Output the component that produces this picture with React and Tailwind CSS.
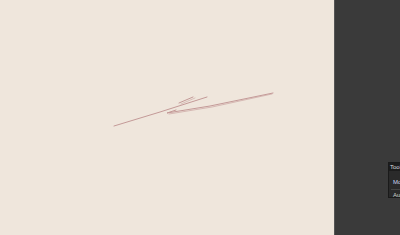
export default function App() {
    return (
        <div className="flex h-[235px] w-[400px] overflow-hidden bg-[#3a3a3a]" style={{ fontFamily: '"Liberation Sans", Arial, sans-serif' }}>
            {/* drawing canvas */}
            <div className="relative h-full w-[334px] shrink-0 bg-[#efe6dc]">
                <svg width="334" height="235" className="absolute left-0 top-0">
                    <g fill="none" stroke="#c49a98" strokeWidth="1" strokeLinecap="round" strokeLinejoin="round">
                        <polyline points="114,126 160,112 207,97" />
                        <polyline points="176,110 167,113 210,106 273,93" />
                        <polyline points="169,114 212,107 272,94" opacity="0.6" />
                        <polyline points="179,103 193,97" />
                        <polyline points="181,104 195,98" opacity="0.5" />
                    </g>
                </svg>
            </div>
            <div className="h-full w-px shrink-0 bg-[#555]" />
            {/* side panel */}
            <div className="relative h-full flex-1 bg-[#3a3a3a]">
                <div className="absolute left-[53px] top-[162px] h-[36px] w-[60px] overflow-hidden border border-[#1a1a1a] bg-[#2a2a2a] text-[6px] leading-[8px]">
                    <div className="bg-[#1c1c1c] px-[1px] text-[#ddd]">Tool options</div>
                    <div className="px-[4px] pt-[7px] pb-[3px] text-[#c8d4f0]">Mode</div>
                    <div className="mx-[2px] border-t border-[#444]" />
                    <div className="px-[4px] pt-[1px] text-[#ccc]">Auto</div>
                </div>
            </div>
        </div>
    );
}
